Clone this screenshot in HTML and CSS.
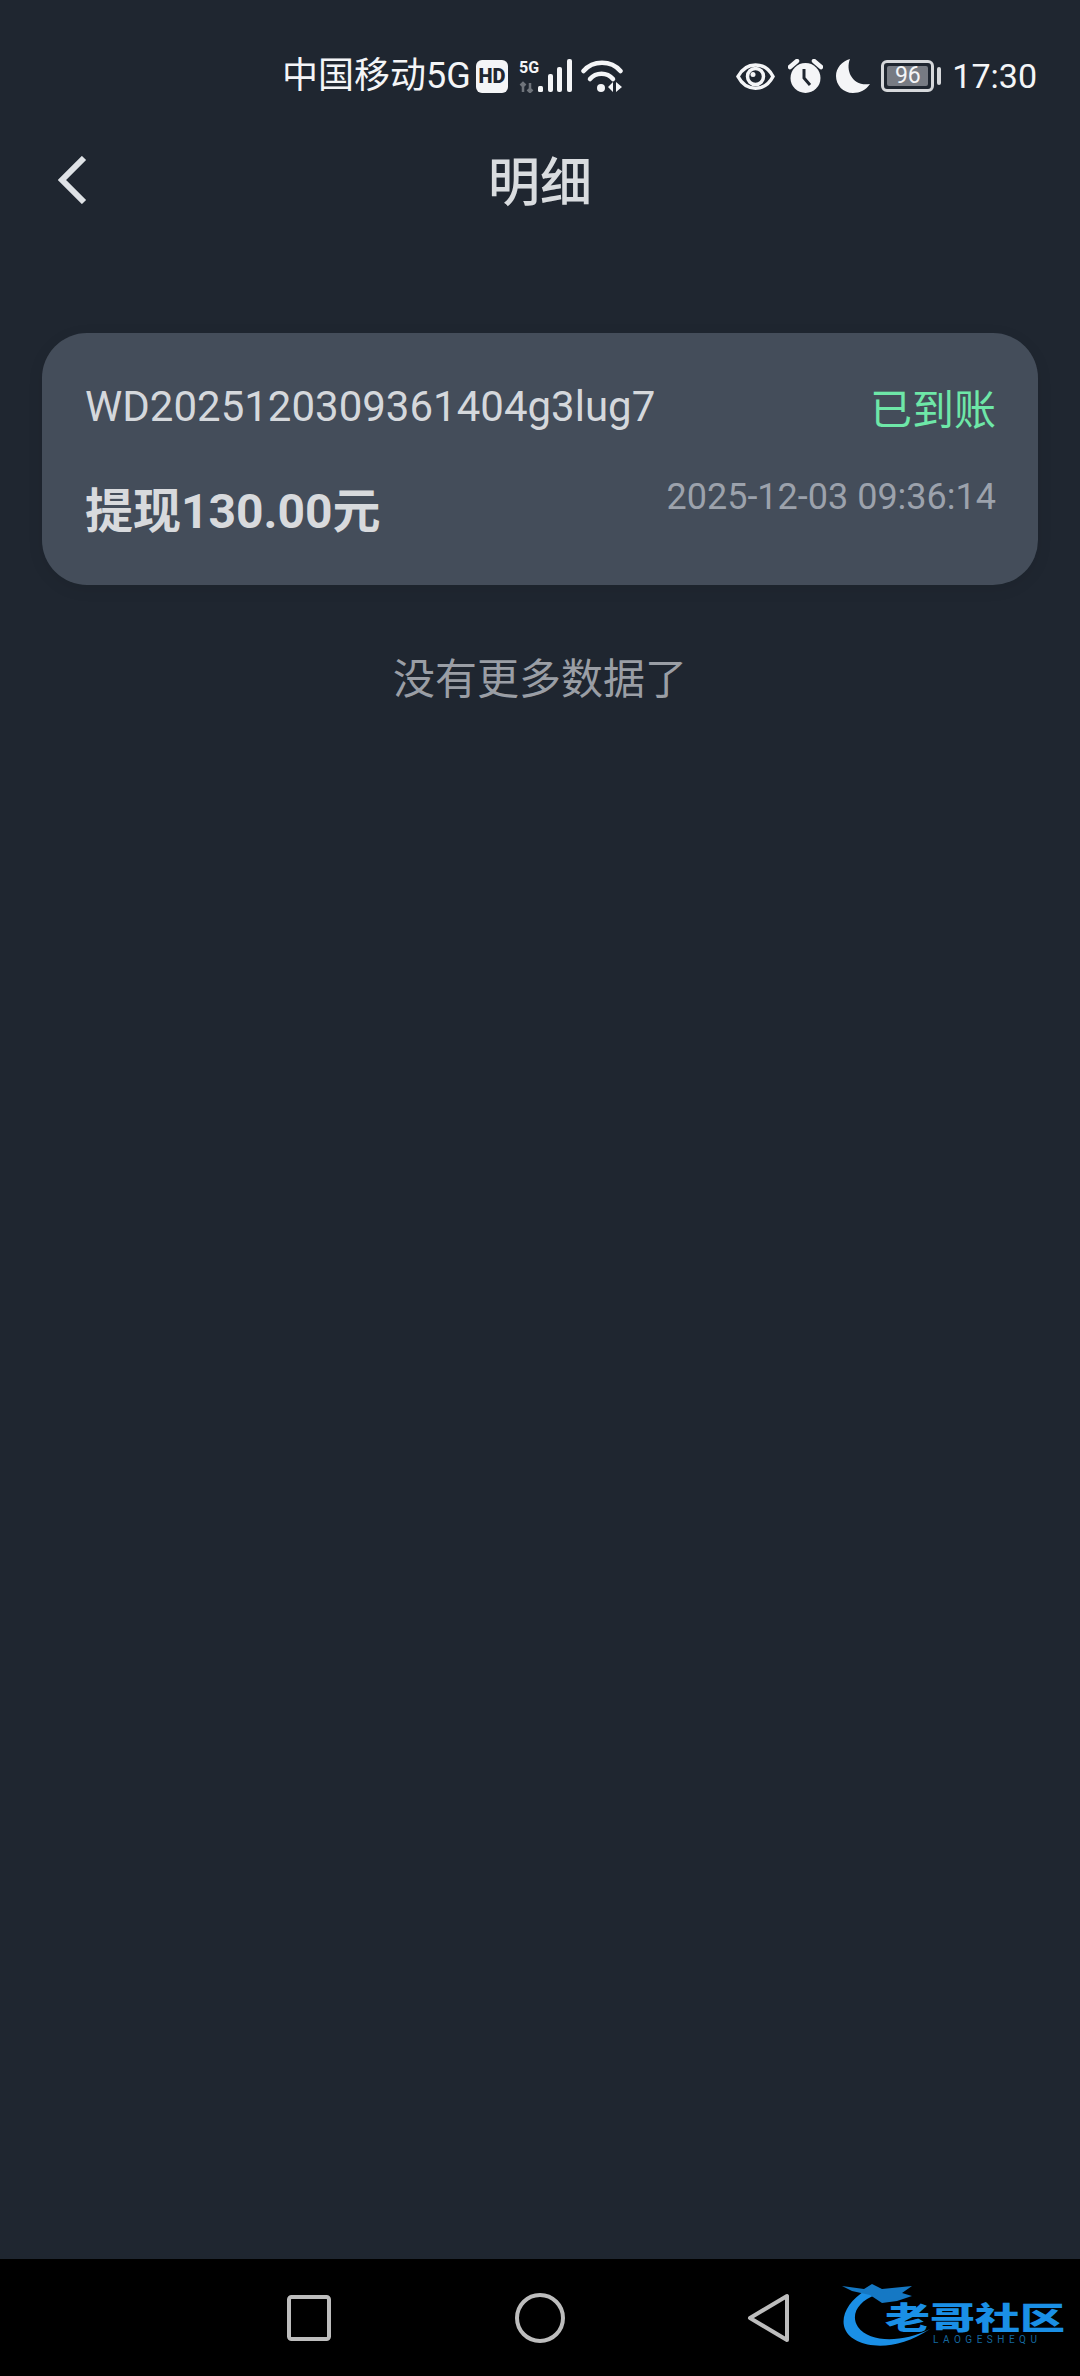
FILE: index.html
```html
<!DOCTYPE html>
<html lang="zh-CN">
<head>
    <meta charset="UTF-8">
    <meta name="viewport" content="width=device-width, initial-scale=1.0">
    <title>明细</title>
    <link rel="stylesheet" href="styles.css">
</head>
<body>
    <div class="page">
        <!-- Status bar -->
        <div class="status-bar">
            <div class="status-left">
                <span class="carrier">中国移动5G</span>
                <svg class="hd-icon" viewBox="0 0 32 33">
                    <rect width="32" height="33" rx="6" fill="#f4f5f7"/>
                    <text x="16" y="23" text-anchor="middle" class="hd-text">HD</text>
                </svg>
                <svg class="signal-icon" viewBox="0 0 54 34">
                    <text x="0" y="14" class="mini-5g">5G</text>
                    <path d="M4 33V24M1.5 26.5L4 24L6.5 26.5M11 24V33M8.500 30.500L11 33L13.500 30.500" fill="none" stroke="#6f747b" stroke-width="2.500"/>
                    <rect x="19" y="27" width="5" height="6" rx="1.500" fill="#f4f5f7"/>
                    <rect x="29" y="15" width="5" height="18" rx="2" fill="#f4f5f7"/>
                    <rect x="38" y="8" width="5" height="25" rx="2" fill="#f4f5f7"/>
                    <rect x="48" y="0" width="5" height="33" rx="2" fill="#f4f5f7"/>
                </svg>
                <svg class="wifi-icon" viewBox="0 0 42 34">
                    <path d="M2.500 12C12 1 30 1 39.500 12" fill="none" stroke="#f4f5f7" stroke-width="4.500" stroke-linecap="round"/>
                    <path d="M9 20C15 13 26 13 32 20" fill="none" stroke="#f4f5f7" stroke-width="4.500" stroke-linecap="round"/>
                    <circle cx="20" cy="29" r="4" fill="#f4f5f7"/>
                    <path d="M32 23V33L27 28ZM35 23V33L41 28Z" fill="#f4f5f7"/>
                </svg>
            </div>
            <div class="status-right">
                <svg class="eye-icon" viewBox="0 0 39 29">
                    <path d="M2 14.500C10 -1 29 -1 37 14.500C29 30 10 30 2 14.500Z" fill="none" stroke="#f4f5f7" stroke-width="3.500"/>
                    <circle cx="19.500" cy="14.500" r="8" fill="none" stroke="#f4f5f7" stroke-width="3.500"/>
                    <circle cx="17" cy="12.500" r="2.500" fill="#f4f5f7"/>
                </svg>
                <svg class="alarm-icon" viewBox="0 0 35 34">
                    <circle cx="17.500" cy="19" r="15" fill="#f4f5f7"/>
                    <path d="M2 8L9 2M33 8L26 2" stroke="#f4f5f7" stroke-width="4.500" stroke-linecap="round"/>
                    <path d="M16 10V19L22 26" fill="none" stroke="#1f2630" stroke-width="3"/>
                </svg>
                <svg class="moon-icon" viewBox="0 0 34 34">
                    <path d="M14 0C9 12 17 28 34 25C30 31 24 34 17 34C7 34 0 26 0 17C0 9 6 2 14 0Z" fill="#f4f5f7"/>
                </svg>
                <div class="battery">
                    <div class="battery-body"><span class="battery-level">96</span></div>
                    <div class="battery-cap"></div>
                </div>
                <span class="clock">17:30</span>
            </div>
        </div>

        <!-- Title row -->
        <div class="header">
            <svg class="back-icon" viewBox="0 0 29 48">
                <path d="M26 2L4 24L26 46" fill="none" stroke="#dfe2e6" stroke-width="6"/>
            </svg>
            <h1 class="title">明细</h1>
        </div>

        <!-- Record list -->
        <div class="content">
            <div class="card">
                <div class="card-left">
                    <div class="order-no">WD2025120309361404g3lug7</div>
                    <div class="amount">提现130.00元</div>
                </div>
                <div class="card-right">
                    <div class="state">已到账</div>
                    <div class="time">2025-12-03 09:36:14</div>
                </div>
            </div>
            <div class="no-more">没有更多数据了</div>
        </div>

        <!-- System navigation -->
        <div class="nav-bar">
            <svg class="nav-square" viewBox="0 0 44 46">
                <rect x="2" y="2" width="40" height="42" rx="2.500" fill="none" stroke="#bdbdbd" stroke-width="4"/>
            </svg>
            <svg class="nav-circle" viewBox="0 0 50 50">
                <circle cx="25" cy="25" r="23" fill="none" stroke="#bdbdbd" stroke-width="4"/>
            </svg>
            <svg class="nav-back" viewBox="0 0 43 50">
                <path d="M40 3V47L3 25Z" fill="none" stroke="#bdbdbd" stroke-width="4" stroke-linejoin="round"/>
            </svg>
            <div class="watermark">
                <svg class="dragon" viewBox="0 0 100 72">
                    <path d="M24 9C6 20 -2 36 3 48C10 66 50 74 88 48C60 62 28 62 16 46C8 34 16 20 34 14Z" fill="#1a8fe6"/>
                    <path d="M0 5L22 8L30 3L40 8L70 5L60 12L70 15L55 20L40 22L28 14L10 10Z" fill="#1578c4"/>
                </svg>
                <div class="wm-name">老哥社区</div>
                <div class="wm-sub">LAOGESHEQU</div>
            </div>
        </div>
    </div>
</body>
</html>
```

FILE: styles.css
```css
* {
    box-sizing: border-box;
}
body {
    margin: 0;
    background-color: #1f2630;
    font-family: Roboto, "Noto Sans CJK SC", sans-serif;
}
.page {
    width: 1080px;
    height: 2376px;
    display: flex;
    flex-direction: column;
    overflow: hidden;
}

/* Status bar */
.status-bar {
    height: 108px;
    padding: 44px 43px 0 282px;
    display: flex;
    justify-content: space-between;
    color: #f4f5f7;
}
.status-left,
.status-right {
    height: 64px;
    display: flex;
    align-items: center;
}
.status-right {
    gap: 13px;
}
.carrier {
    font-size: 36px;
    line-height: 44px;
    margin-right: 5px;
}
.hd-icon {
    width: 32px;
    height: 33px;
    margin-right: 11px;
}
.hd-text {
    font-size: 20px;
    font-weight: 900;
    fill: #1f2630;
}
.signal-icon {
    width: 54px;
    height: 34px;
    margin-right: 8px;
}
.mini-5g {
    font-size: 16px;
    font-weight: 700;
    fill: #f4f5f7;
}
.wifi-icon {
    width: 42px;
    height: 34px;
}
.eye-icon {
    width: 39px;
    height: 29px;
}
.alarm-icon {
    width: 35px;
    height: 34px;
}
.moon-icon {
    width: 34px;
    height: 34px;
}
.battery {
    margin-left: -2px;
    display: flex;
    align-items: center;
    gap: 3px;
}
.battery-body {
    width: 53px;
    height: 32px;
    padding: 3px;
    border: 3px solid #d6d8db;
    border-radius: 6px;
    display: flex;
}
.battery-level {
    flex: 1;
    background-color: #777b83;
    border-radius: 2px;
    color: #f4f5f7;
    font-size: 23px;
    line-height: 20px;
    text-align: center;
}
.battery-cap {
    width: 4px;
    height: 18px;
    background-color: #d6d8db;
    border-radius: 2px;
}
.clock {
    margin-left: -2px;
    font-size: 34px;
}

/* Title row */
.header {
    height: 152px;
    padding-left: 58px;
    display: flex;
    align-items: center;
    position: relative;
}
.back-icon {
    width: 29px;
    height: 48px;
    margin-top: -8px;
}
.title {
    position: absolute;
    left: 0;
    right: 0;
    margin: 0;
    color: #d9dcdf;
    font-size: 52px;
    font-weight: 500;
    line-height: 60px;
    text-align: center;
}

/* Record list */
.content {
    flex: 1;
    padding: 73px 42px 0;
}
.card {
    height: 252px;
    padding: 44px 42px 0 43px;
    background-color: #444d5a;
    border-radius: 45px;
    box-shadow: 0 4px 16px rgba(0, 0, 0, 0.08);
    display: flex;
    justify-content: space-between;
}
.card-left {
    display: flex;
    flex-direction: column;
    gap: 45px;
}
.order-no {
    color: #d5d8dc;
    font-size: 42px;
    line-height: 60px;
}
.amount {
    color: #d8dadd;
    font-size: 48px;
    font-weight: 700;
    line-height: 60px;
}
.card-right {
    padding-top: 4px;
    display: flex;
    flex-direction: column;
    align-items: flex-end;
    gap: 31px;
}
.state {
    color: #6ee7a8;
    font-size: 42px;
    line-height: 60px;
}
.time {
    color: #9ca2ac;
    font-size: 36px;
    line-height: 50px;
}
.no-more {
    margin-top: 65px;
    color: #9a9ea5;
    font-size: 42px;
    line-height: 60px;
    text-align: center;
}

/* System navigation */
.nav-bar {
    height: 117px;
    padding: 34px 0 0 287px;
    background-color: #000;
    display: flex;
    align-items: flex-start;
    position: relative;
}
.nav-square {
    width: 44px;
    height: 46px;
    margin-top: 2px;
    margin-right: 184px;
}
.nav-circle {
    width: 50px;
    height: 50px;
    margin-right: 182px;
}
.nav-back {
    width: 43px;
    height: 50px;
}
.watermark {
    position: absolute;
    left: 842px;
    top: 22px;
    width: 222px;
    height: 72px;
}
.dragon {
    width: 100px;
    height: 72px;
    display: block;
}
.wm-name {
    position: absolute;
    left: 43px;
    top: 10px;
    color: #1a8fe6;
    font-size: 45px;
    font-weight: 900;
    line-height: 56px;
    white-space: nowrap;
    transform: scaleY(0.68);
}
.wm-sub {
    position: absolute;
    left: 91px;
    top: 54px;
    color: #14679f;
    font-size: 10px;
    line-height: 10px;
    letter-spacing: 4.500px;
    white-space: nowrap;
}
```
